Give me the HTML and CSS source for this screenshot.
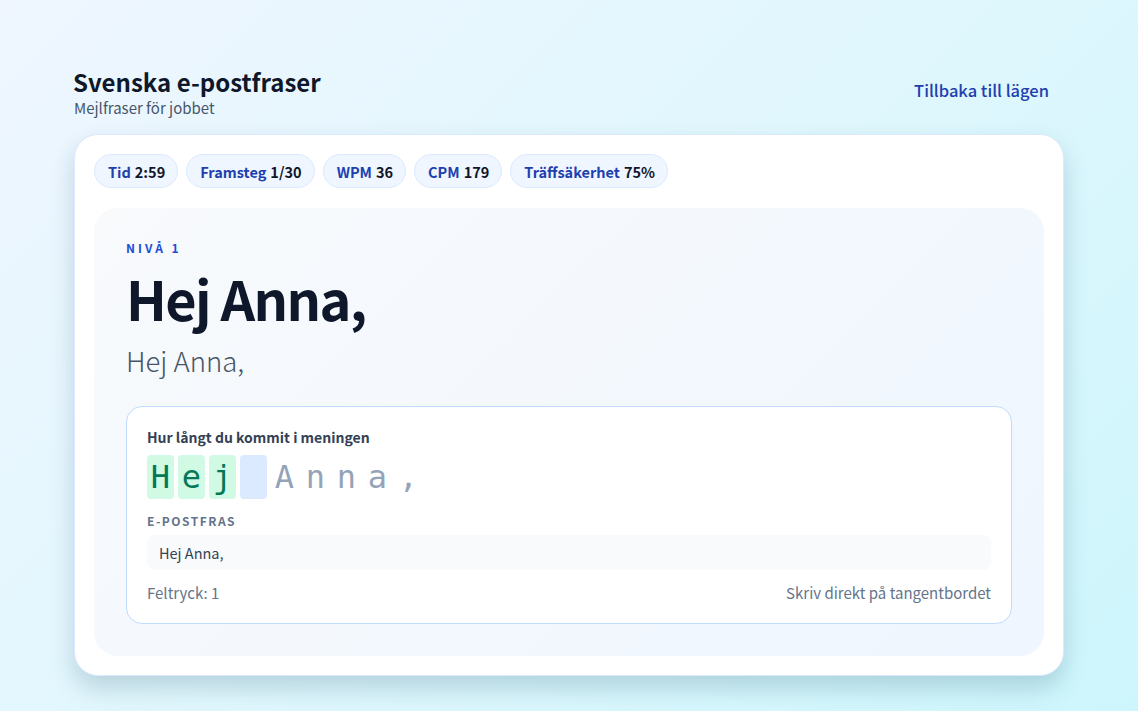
FILE: index.html
```html
<!DOCTYPE html>
<html lang="sv">
<head>
<meta charset="utf-8">
<title>Svenska e-postfraser</title>
<link rel="stylesheet" href="styles.css">
</head>
<body>
<main class="page">
  <header class="top">
    <div class="top-titles">
      <h1 class="title">Svenska e-postfraser</h1>
      <p class="subtitle">Mejlfraser för jobbet</p>
    </div>
    <a class="back" href="#">Tillbaka till lägen</a>
  </header>

  <section class="card">
    <div class="stats">
      <span class="chip"><span class="chip-label">Tid</span> <span class="chip-value">2:59</span></span>
      <span class="chip"><span class="chip-label">Framsteg</span> <span class="chip-value">1/30</span></span>
      <span class="chip"><span class="chip-label">WPM</span> <span class="chip-value">36</span></span>
      <span class="chip"><span class="chip-label">CPM</span> <span class="chip-value">179</span></span>
      <span class="chip"><span class="chip-label">Träffsäkerhet</span> <span class="chip-value">75%</span></span>
    </div>

    <div class="panel">
      <div class="level">NIVÅ 1</div>
      <div class="phrase">Hej Anna,</div>
      <div class="phrase-sub">Hej Anna,</div>

      <div class="typing">
        <div class="typing-label">Hur långt du kommit i meningen</div>
        <div class="chars">
          <span class="ch done">H</span><span class="ch done">e</span><span class="ch done">j</span><span class="ch current">&nbsp;</span><span class="ch">A</span><span class="ch">n</span><span class="ch">n</span><span class="ch">a</span><span class="ch">,</span>
        </div>
        <div class="field-label">E-POSTFRAS</div>
        <div class="field">Hej Anna,</div>
        <div class="typing-foot">
          <span>Feltryck: 1</span>
          <span>Skriv direkt på tangentbordet</span>
        </div>
      </div>
    </div>
  </section>
</main>
</body>
</html>
```

FILE: styles.css
```css
* {
  box-sizing: border-box;
}

html, body {
  margin: 0;
  min-height: 100%;
}

body {
  font-family: "Noto Sans CJK JP", "Noto Sans", sans-serif;
  color: #0f172a;
  background: linear-gradient(135deg, #eff6ff 0%, #e0f7fd 50%, #cdf6fc 100%);
  min-height: 711px;
}

.page {
  width: 990px;
  margin: 0 auto;
  padding-top: 66px;
}

.top {
  display: flex;
  justify-content: space-between;
  align-items: center;
  padding: 0 15px 0 0;
  margin-bottom: 16px;
}

.title {
  margin: 0 0 0 -1px;
  font-size: 24px;
  font-weight: 700;
  line-height: 32px;
  color: #0f172a;
}

.subtitle {
  margin: 0;
  font-size: 15px;
  line-height: 20px;
  color: #475569;
}

.back {
  font-size: 16.5px;
  font-weight: 500;
  color: #1e40af;
  text-decoration: none;
  margin-top: -4px;
}

.card {
  background: #ffffff;
  border: 1px solid #dbeafe;
  border-radius: 24px;
  padding: 19px;
  box-shadow: 0 12px 24px rgba(15, 70, 100, 0.2);
}

.stats {
  display: flex;
  gap: 8px;
  margin-bottom: 20px;
}

.chip {
  display: inline-flex;
  align-items: center;
  gap: 4px;
  height: 34px;
  padding: 0 12px 0 13px;
  border-radius: 999px;
  background: #eff6ff;
  border: 1px solid #dbeafe;
  font-size: 14.5px;
  font-weight: 700;
}

.chip-label {
  color: #1e40af;
}

.chip-value {
  color: #0f172a;
}

.panel {
  border-radius: 24px;
  background: linear-gradient(135deg, #f8fafc 0%, #eff6ff 100%);
  padding: 32px;
}

.level {
  font-size: 12px;
  font-weight: 700;
  letter-spacing: 3px;
  color: #1d4ed8;
  line-height: 16px;
}

.phrase {
  margin-top: 10px;
  font-size: 54px;
  font-weight: 700;
  line-height: 64px;
  letter-spacing: -0.03em;
  color: #0f172a;
}

.phrase-sub {
  margin-top: 12px;
  font-size: 27.5px;
  font-weight: 300;
  line-height: 36px;
  color: #475569;
}

.typing {
  margin-top: 28px;
  background: #ffffff;
  border: 1px solid #bfdbfe;
  border-radius: 16px;
  padding: 20px;
}

.typing-label {
  font-size: 14px;
  font-weight: 700;
  color: #334155;
  line-height: 20px;
}

.chars {
  display: flex;
  gap: 4px;
  margin-top: 8px;
}

.ch {
  display: inline-flex;
  align-items: center;
  justify-content: center;
  width: 27px;
  height: 44px;
  border-radius: 4px;
  font-family: "DejaVu Sans Mono", monospace;
  font-size: 32px;
  color: #94a3b8;
}

.ch.done {
  background: #d1fae5;
  color: #047857;
}

.ch.current {
  background: #dbeafe;
}

.field-label {
  margin-top: 14px;
  font-size: 12px;
  font-weight: 700;
  letter-spacing: 1.5px;
  color: #64748b;
  line-height: 16px;
}

.field {
  margin-top: 6px;
  background: #f8fafc;
  border-radius: 8px;
  padding: 0 12px;
  height: 35px;
  display: flex;
  align-items: center;
  font-size: 14.5px;
  color: #334155;
}

.typing-foot {
  margin-top: 13px;
  display: flex;
  justify-content: space-between;
  font-size: 15px;
  line-height: 20px;
  color: #64748b;
}
```
